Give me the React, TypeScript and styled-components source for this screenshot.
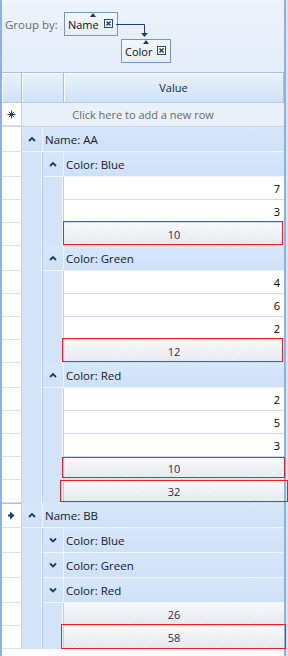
import React from 'react';
import styled, { createGlobalStyle } from 'styled-components';

type Mark = { t: number; r: number; b: number; l: number };

type GridRow =
  | { kind: 'group'; level: number; label: string; expanded: boolean; current?: boolean }
  | { kind: 'data'; value: number }
  | { kind: 'footer'; value: number; mark?: Mark };

const rows: GridRow[] = [
  { kind: 'group', level: 0, label: 'Name: AA', expanded: true },
  { kind: 'group', level: 1, label: 'Color: Blue', expanded: true },
  { kind: 'data', value: 7 },
  { kind: 'data', value: 3 },
  { kind: 'footer', value: 10, mark: { t: -2, r: 1, b: 0, l: -1 } },
  { kind: 'group', level: 1, label: 'Color: Green', expanded: true },
  { kind: 'data', value: 4 },
  { kind: 'data', value: 6 },
  { kind: 'data', value: 2 },
  { kind: 'footer', value: 12, mark: { t: -2, r: 1, b: 0, l: -2 } },
  { kind: 'group', level: 1, label: 'Color: Red', expanded: true },
  { kind: 'data', value: 2 },
  { kind: 'data', value: 5 },
  { kind: 'data', value: 3 },
  { kind: 'footer', value: 10, mark: { t: 0, r: -1, b: 1, l: -2 } },
  { kind: 'footer', value: 32, mark: { t: 0, r: -4, b: 0, l: -4 } },
  { kind: 'group', level: 0, label: 'Name: BB', expanded: true, current: true },
  { kind: 'group', level: 1, label: 'Color: Blue', expanded: false },
  { kind: 'group', level: 1, label: 'Color: Green', expanded: false },
  { kind: 'group', level: 1, label: 'Color: Red', expanded: false },
  { kind: 'footer', value: 26 },
  { kind: 'footer', value: 58, mark: { t: -2, r: -2, b: -1, l: -3 } },
];

const GlobalStyle = createGlobalStyle`
  *, *::before, *::after { box-sizing: border-box; }
  html, body {
    margin: 0;
    padding: 0;
    background: #d9e6f7;
  }
  body {
    font-family: "Open Sans", "Liberation Sans", Arial, sans-serif;
    font-size: 11px;
  }
`;

const Chevron = ({ up }: { up: boolean }) => (
  <svg width="8" height="6" viewBox="0 0 8 6">
    <polyline
      points={up ? '1,5 4,2 7,5' : '1,1.5 4,4.5 7,1.5'}
      fill="none"
      stroke="#1d3a6b"
      strokeWidth="1.8"
    />
  </svg>
);

const NewRowStar = () => (
  <svg width="9" height="9" viewBox="0 0 9 9">
    <g stroke="#1d3a6b" strokeWidth="1">
      <line x1="4.5" y1="0.5" x2="4.5" y2="8.5" />
      <line x1="0.5" y1="4.5" x2="8.5" y2="4.5" />
      <line x1="1.8" y1="1.8" x2="7.2" y2="7.2" />
      <line x1="7.2" y1="1.8" x2="1.8" y2="7.2" />
    </g>
  </svg>
);

const CurrentArrow = () => (
  <svg width="7" height="9" viewBox="0 0 7 9">
    <polygon points="2,0.5 6.5,4.5 2,8.5" fill="#1d3a6b" />
    <rect x="0" y="3.5" width="3" height="2" fill="#1d3a6b" />
  </svg>
);

const CloseGlyph = () => (
  <svg width="7" height="7" viewBox="0 0 7 7">
    <g stroke="#1d3a6b" strokeWidth="1.4">
      <line x1="1.5" y1="1.5" x2="5.5" y2="5.5" />
      <line x1="5.5" y1="1.5" x2="1.5" y2="5.5" />
    </g>
  </svg>
);

const App: React.FC = () => {
  return (
    <>
      <GlobalStyle />
      <Grid>
        <GroupPanel>
          <PanelLine>
            <GroupByLabel>Group by:</GroupByLabel>
            <Chip>
              <ChipText>
                Name
                <SortArrow />
              </ChipText>
              <CloseBox>
                <CloseGlyph />
              </CloseBox>
            </Chip>
          </PanelLine>
          <PanelLine $indent={119}>
            <Chip>
              <ChipText>
                Color
                <SortArrow />
              </ChipText>
              <CloseBox>
                <CloseGlyph />
              </CloseBox>
            </Chip>
          </PanelLine>
          <Connector width="286" height="72" viewBox="0 0 286 72">
            <path d="M114 23.5 H142.5 V33" fill="none" stroke="#1d3f7a" strokeWidth="1" />
            <polygon points="139,32 146,32 142.5,36" fill="#1d3f7a" />
          </Connector>
        </GroupPanel>

        <HeaderRow>
          <HeaderCell $w={20} />
          <HeaderCell $w={42} />
          <HeaderCell>Value</HeaderCell>
        </HeaderRow>

        <NewRow>
          <Indicator>
            <NewRowStar />
          </Indicator>
          <NewRowCell>Click here to add a new row</NewRowCell>
        </NewRow>

        {rows.map((row, i) => {
          if (row.kind === 'group') {
            return (
              // eslint-disable-next-line react/no-array-index-key
              <Row key={i} $h={25}>
                <Indicator $current={row.current}>{row.current && <CurrentArrow />}</Indicator>
                {row.level > 0 && <Indent />}
                <ExpandCell>
                  <Chevron up={row.expanded} />
                </ExpandCell>
                <GroupLabel>{row.label}</GroupLabel>
              </Row>
            );
          }
          if (row.kind === 'data') {
            return (
              // eslint-disable-next-line react/no-array-index-key
              <Row key={i} $h={23}>
                <Indicator />
                <Indent />
                <Indent />
                <DataCell>{row.value}</DataCell>
              </Row>
            );
          }
          return (
            // eslint-disable-next-line react/no-array-index-key
            <Row key={i} $h={23}>
              <Indicator />
              <Indent />
              <Indent />
              <FooterCell>
                {row.value}
                {row.mark && (
                  <Highlight
                    style={{
                      top: row.mark.t,
                      right: row.mark.r,
                      bottom: row.mark.b,
                      left: row.mark.l,
                    }}
                  />
                )}
              </FooterCell>
            </Row>
          );
        })}
        <Filler />
      </Grid>
    </>
  );
};

const Grid = styled.div`
  width: 286px;
  height: 656px;
  border-left: 2px solid #8db1e2;
  border-right: 2px solid #8db1e2;
  background: #ffffff;
  display: flex;
  flex-direction: column;
`;

const GroupPanel = styled.div`
  position: relative;
  height: 72px;
  flex-shrink: 0;
  padding: 11px 0 0 0;
  background: linear-gradient(#edf3fc, #e3ecf8);
  border-top: 1px solid #f4f8fd;
`;

const PanelLine = styled.div<{ $indent?: number }>`
  display: flex;
  align-items: flex-start;
  margin-left: ${({ $indent }) => $indent ?? 0}px;
  margin-top: ${({ $indent }) => ($indent ? 3 : 0)}px;
`;

const GroupByLabel = styled.span`
  color: #6b6b6b;
  font-size: 11.5px;
  margin: 6px 6px 0 3px;
  line-height: 14px;
`;

const Chip = styled.div`
  display: flex;
  align-items: center;
  height: 24px;
  padding: 0 4px 0 3px;
  border: 1px solid #7896c2;
  background: linear-gradient(#f4f8fd, #e6eef9);
  color: #111;
`;

const ChipText = styled.span`
  position: relative;
  line-height: 14px;
  margin-right: 5px;
  margin-top: 2px;
`;

const SortArrow = styled.span`
  position: absolute;
  right: 3px;
  top: -5px;
  width: 0;
  height: 0;
  border-left: 3.5px solid transparent;
  border-right: 3.5px solid transparent;
  border-bottom: 4px solid #1d3a6b;
`;

const CloseBox = styled.span`
  display: flex;
  align-items: center;
  justify-content: center;
  width: 9px;
  height: 9px;
  border: 1px solid #2a4a80;
  background: #f5f8fd;
  margin-top: -2px;
`;

const Connector = styled.svg`
  position: absolute;
  left: 0;
  top: 0;
  pointer-events: none;
`;

const HeaderRow = styled.div`
  display: flex;
  height: 31px;
  flex-shrink: 0;
  border-top: 1px solid #a7c0e2;
  border-bottom: 1px solid #b4cae6;
`;

const HeaderCell = styled.div<{ $w?: number }>`
  ${({ $w }) => ($w ? `width: ${$w}px;` : 'flex: 1;')}
  flex-shrink: 0;
  display: flex;
  align-items: center;
  justify-content: center;
  border-right: 1px solid #a9c1e1;
  box-shadow: inset 1px 1px 0 #f8fbff;
  background: linear-gradient(#eaf2fc, #d0e2f8);
  color: #15283d;
`;

const Row = styled.div<{ $h: number }>`
  display: flex;
  height: ${({ $h }) => $h}px;
  flex-shrink: 0;
`;

const NewRow = styled(Row).attrs({ $h: 24 })`
  border-bottom: 1px solid #c3d6ee;
`;

const Indicator = styled.div<{ $current?: boolean }>`
  width: 20px;
  flex-shrink: 0;
  display: flex;
  align-items: center;
  justify-content: center;
  background: #ffffff;
  border-right: 1px solid #c2d4ec;
  border-bottom: 1px solid #d4e2f3;
  border-top: ${({ $current }) => ($current ? '1px solid #f4b84f' : 'none')};
`;

const NewRowCell = styled.div`
  flex: 1;
  display: flex;
  align-items: center;
  justify-content: center;
  padding-right: 20px;
  background: #e9f0fa;
  color: #6a6a6a;
`;

const Indent = styled.div`
  width: 21px;
  flex-shrink: 0;
  background: #d3e3f8;
  border-right: 1px solid #bccfe9;
  box-shadow: inset -1px 0 0 #f3f7fd;
`;

const ExpandCell = styled.div`
  width: 21px;
  flex-shrink: 0;
  display: flex;
  align-items: center;
  justify-content: center;
  background: linear-gradient(#d8e7fa, #cfe1f8);
  border-right: 1px solid #f1f6fd;
  border-bottom: 1px solid #f1f6fd;
`;

const GroupLabel = styled.div`
  flex: 1;
  display: flex;
  align-items: center;
  padding-left: 2px;
  font-size: 11.5px;
  background: linear-gradient(#d8e7fa, #cfe1f8);
  border-bottom: 1px solid #f1f6fd;
  color: #15202f;
`;

const DataCell = styled.div`
  flex: 1;
  display: flex;
  align-items: center;
  justify-content: flex-end;
  padding-right: 4px;
  background: #ffffff;
  border-bottom: 1px solid #cddef2;
  color: #000;
`;

const FooterCell = styled.div`
  position: relative;
  flex: 1;
  display: flex;
  align-items: center;
  justify-content: center;
  color: #3a1f4d;
  border-bottom: 1px solid #cddef2;
  background:
    repeating-linear-gradient(135deg, rgba(255, 255, 255, 0.35) 0 1px, transparent 1px 3px),
    linear-gradient(#f7f8fa, #e2e6ee);
`;

const Highlight = styled.span`
  position: absolute;
  border: 1px solid #ee1c25;
  pointer-events: none;
  z-index: 2;
`;

const Filler = styled.div`
  flex: 1;
  background: #ffffff;
`;

export default App;
